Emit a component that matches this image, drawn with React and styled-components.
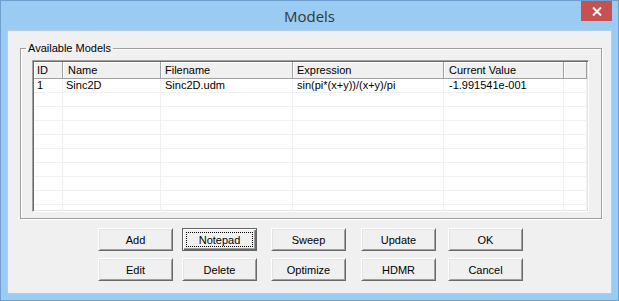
import styled, { createGlobalStyle } from "styled-components";

const Global = createGlobalStyle`
  html, body { margin: 0; padding: 0; background: #fff; }
  body { font-family: "Liberation Sans", Arial, sans-serif; }
  * { box-sizing: border-box; }
`

const Window = styled.div`
  width: 619px;
  height: 301px;
  border: 1px solid #6f9fcf;
  background: #9acbf2;
  display: flex;
  flex-direction: column;
`

const TitleBar = styled.div`
  height: 29px;
  display: grid;
  grid-template-columns: 1fr auto 1fr;
  align-items: start;
`

const Title = styled.div`
  grid-column: 2;
  font-family: "Open Sans", "Noto Sans", sans-serif;
  font-size: 15px;
  line-height: 20px;
  padding-top: 5px;
  color: #363636;
`

const CloseButton = styled.div`
  grid-column: 3;
  justify-self: end;
  margin-right: 6px;
  width: 31px;
  height: 20px;
  background: #c75050;
  display: flex;
  align-items: center;
  justify-content: center;
`

const Client = styled.div`
  flex: 1;
  margin: 0 6px 6px 6px;
  border: 1px solid #b3cde6;
  background: #f0f0f0;
  display: flex;
  flex-direction: column;
  font-size: 11px;
  color: #000;
`

const Group = styled.fieldset`
  margin: 11px 9px 0 12px;
  padding: 0 12px 6px 11px;
  border: 1px solid #a0a0a0;
  box-shadow: 1px 1px 0 #fff, inset 1px 1px 0 #fff;
  min-width: 0;
`

const Legend = styled.legend`
  padding: 0 2px;
  margin-left: -6px;
  line-height: 13px;
  font-size: 11px;
`

const ListBox = styled.div`
  margin-top: 5px;
  height: 152px;
  border: 1px solid;
  border-color: #a0a0a0 #fff #fff #a0a0a0;
  box-shadow: inset 1px 1px 0 #696969, inset -1px -1px 0 #e3e3e3;
  padding: 1px;
  background: #fff;
  overflow: hidden;
`

const Grid = styled.div`
  display: grid;
  grid-template-columns: 29px 98px 132px 151px 120px 1fr;
`

const HeadCell = styled.div`
  height: 17px;
  line-height: 16px;
  padding-left: ${p => p.$pad}px;
  background: #f0f0f0;
  border-right: 1px solid #a0a0a0;
  border-bottom: 1px solid #a0a0a0;
  box-shadow: inset 1px 1px 0 #fff;
  white-space: nowrap;
  overflow: hidden;
`

const Cell = styled.div`
  height: 14px;
  line-height: 13px;
  padding-left: ${p => p.$pad}px;
  border-right: 1px solid #f0f0f0;
  border-bottom: 1px solid #f0f0f0;
  white-space: nowrap;
  overflow: hidden;
`

const ButtonArea = styled.div`
  display: flex;
  margin-top: 9px;
`

const ButtonColumn = styled.div`
  display: flex;
  flex-direction: column;
  gap: 7px;
  margin-left: ${p => p.$ml}px;
`

const Button = styled.button`
  position: relative;
  width: 75px;
  height: 23px;
  padding: 0;
  font-family: "Liberation Sans", Arial, sans-serif;
  font-size: 11px;
  color: #000;
  background: #f0f0f0;
  border: 1px solid;
  border-color: ${p => (p.$focused ? "#646464" : "#fff #696969 #696969 #fff")};
  box-shadow: ${p =>
    p.$focused
      ? "inset 1px 1px 0 #fff, inset -1px -1px 0 #696969, inset -2px -2px 0 #a0a0a0"
      : "inset 1px 1px 0 #e3e3e3, inset -1px -1px 0 #a0a0a0"};
  &::after {
    content: "";
    display: ${p => (p.$focused ? "block" : "none")};
    position: absolute;
    inset: 3px;
    border: 1px dotted #000;
  }
`

const columns = [
  { label: "ID", pad: 3 },
  { label: "Name", pad: 5 },
  { label: "Filename", pad: 4 },
  { label: "Expression", pad: 4 },
  { label: "Current Value", pad: 5 },
  { label: "", pad: 0 },
];

const rows = [
  ["1", "Sinc2D", "Sinc2D.udm", "sin(pi*(x+y))/(x+y)/pi", "-1.991541e-001", ""],
  ...Array.from({ length: 9 }, () => ["", "", "", "", "", ""]),
];

const cellPad = [3, 3, 4, 4, 5, 0];

const buttons = [
  { ml: 90, items: ["Add", "Edit"] },
  { ml: 9, items: ["Notepad", "Delete"] },
  { ml: 14, items: ["Sweep", "Optimize"] },
  { ml: 15, items: ["Update", "HDMR"] },
  { ml: 12, items: ["OK", "Cancel"] },
];

export default function App() {
  return <>
    <Global />
    <Window>
      <TitleBar>
        <Title>Models</Title>
        <CloseButton>
          <svg width="10" height="9" viewBox="0 0 10 9">
            <path d="M1 0.5 L9 8.5 M9 0.5 L1 8.5" stroke="#fff" strokeWidth="2" />
          </svg>
        </CloseButton>
      </TitleBar>
      <Client>
        <Group>
          <Legend>Available Models</Legend>
          <ListBox>
            <Grid>
              {columns.map((c, i) => <HeadCell key={i} $pad={c.pad}>{c.label}</HeadCell>)}
              {rows.map((r, ri) =>
                r.map((v, ci) => <Cell key={ri + "-" + ci} $pad={cellPad[ci]}>{v}</Cell>)
              )}
            </Grid>
          </ListBox>
        </Group>
        <ButtonArea>
          {buttons.map(col => (
            <ButtonColumn key={col.items[0]} $ml={col.ml}>
              {col.items.map(b => <Button key={b} $focused={b === "Notepad"}>{b}</Button>)}
            </ButtonColumn>
          ))}
        </ButtonArea>
      </Client>
    </Window>
  </>
};
